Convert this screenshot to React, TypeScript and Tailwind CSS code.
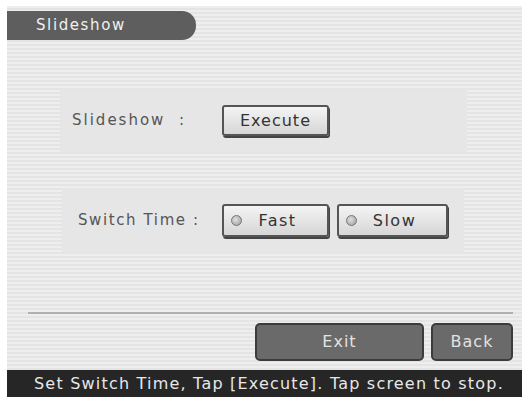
const font = { fontFamily: '"DejaVu Sans", "Liberation Sans", sans-serif' }

function LampButton({ label, width }: { label: string; width: string }) {
  return (
    <button
      className={`${width} h-[33px] flex items-center bg-gradient-to-b from-[#f4f4f4] to-[#d6d6d6] border-[2px] border-[#555] rounded-[3px] shadow-[1px_2px_0_#444] text-[#333] text-[16px]`}
    >
      <span className="ml-[7px] w-[11px] h-[11px] rounded-full bg-[radial-gradient(circle_at_40%_40%,#e0e0e0,#999)] border border-[#777]" />
      <span className="flex-1 text-center pr-[14px] tracking-[1.5px]">{label}</span>
    </button>
  )
}

export default function App() {
  return (
    <div className="w-[532px] h-[401px] bg-white pt-[6px] pl-[7px]" style={font}>
      <div className="w-[515px] h-[391px] flex flex-col bg-[repeating-linear-gradient(to_bottom,#eeeeee_0px,#eeeeee_2px,#e4e4e4_2px,#e4e4e4_4px)]">
        {/* Title tab */}
        <div className="mt-[5px] h-[29px] w-[189px] bg-[#5e5e5e] rounded-r-[14px] flex items-center pl-[29px] text-[#f0f0f0] text-[15px] tracking-[1.6px]">
          Slideshow
        </div>

        {/* Slideshow row */}
        <div className="mt-[49px] ml-[53px] w-[407px] h-[63px] bg-[#e6e6e6] flex items-center">
          <span className="ml-[12px] w-[150px] text-[#555] text-[15px] tracking-[2px] whitespace-pre">Slideshow  :</span>
          <button className="h-[31px] w-[107px] bg-gradient-to-b from-[#f4f4f4] to-[#d6d6d6] border-[2px] border-[#555] rounded-[3px] shadow-[1px_2px_0_#444] text-[#333] text-[16px] tracking-[1px]">
            Execute
          </button>
        </div>

        {/* Switch time row */}
        <div className="mt-[36px] ml-[55px] w-[402px] h-[65px] bg-[#e6e6e6] flex items-center">
          <span className="ml-[16px] w-[144px] text-[#555] text-[15px] tracking-[1.6px]">Switch Time :</span>
          <div className="flex gap-[8px]">
            <LampButton label="Fast" width="w-[107px]" />
            <LampButton label="Slow" width="w-[111px]" />
          </div>
        </div>

        {/* Separator */}
        <div className="mt-[59px] ml-[21px] w-[485px] h-[2px] bg-[#b0b0b0]" />

        {/* Bottom buttons */}
        <div className="mt-[9px] flex justify-end gap-[7px] pr-[9px]">
          <button className="w-[169px] h-[38px] bg-[#6a6a6a] border-[2px] border-[#3c3c3c] rounded-[5px] text-[#e2e2e2] text-[16px] tracking-[1px]">
            Exit
          </button>
          <button className="w-[82px] h-[38px] bg-[#6a6a6a] border-[2px] border-[#3c3c3c] rounded-[5px] text-[#e2e2e2] text-[16px] tracking-[1px]">
            Back
          </button>
        </div>

        {/* Status bar */}
        <div className="mt-auto h-[27px] bg-[#262626] flex items-center pl-[27px] text-[#e8e8e8] text-[16px] tracking-[1.2px] whitespace-nowrap">
          Set Switch Time, Tap [Execute]. Tap screen to stop.
        </div>
      </div>
    </div>
  )
}
